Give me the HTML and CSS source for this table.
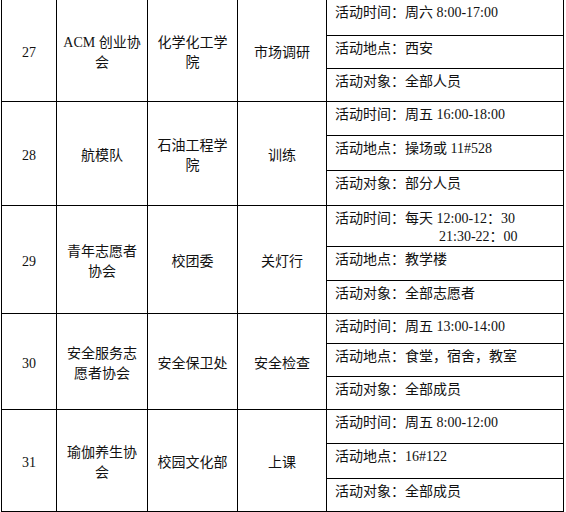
FILE: index.html
```html
<!DOCTYPE html>
<html lang="zh-CN">
<head>
<meta charset="utf-8">
<title>社团活动表</title>
<link rel="stylesheet" href="styles.css">
</head>
<body>
<table class="grid">
  <colgroup>
    <col class="c-num"><col class="c-org"><col class="c-dep"><col class="c-act"><col class="c-det">
  </colgroup>
  <tbody>
    <tr class="first">
      <td rowspan="3" class="mid">27</td>
      <td rowspan="3" class="mid">ACM 创业协<br>会</td>
      <td rowspan="3" class="mid">化学化工学<br>院</td>
      <td rowspan="3" class="mid">市场调研</td>
      <td class="det h35">活动时间：周六 8:00-17:00</td>
    </tr>
    <tr><td class="det h33">活动地点：西安</td></tr>
    <tr><td class="det h33">活动对象：全部人员</td></tr>

    <tr>
      <td rowspan="3" class="mid">28</td>
      <td rowspan="3" class="mid">航模队</td>
      <td rowspan="3" class="mid">石油工程学<br>院</td>
      <td rowspan="3" class="mid">训练</td>
      <td class="det h34">活动时间：周五 16:00-18:00</td>
    </tr>
    <tr><td class="det h35">活动地点：操场或 11#528</td></tr>
    <tr><td class="det h35">活动对象：部分人员</td></tr>

    <tr>
      <td rowspan="3" class="mid">29</td>
      <td rowspan="3" class="mid">青年志愿者<br>协会</td>
      <td rowspan="3" class="mid">校团委</td>
      <td rowspan="3" class="mid">关灯行</td>
      <td class="det h40">活动时间：每天 12:00-12：30<span class="cont">21:30-22：00</span></td>
    </tr>
    <tr><td class="det h34">活动地点：教学楼</td></tr>
    <tr><td class="det h33">活动对象：全部志愿者</td></tr>

    <tr>
      <td rowspan="3" class="mid">30</td>
      <td rowspan="3" class="mid">安全服务志<br>愿者协会</td>
      <td rowspan="3" class="mid">安全保卫处</td>
      <td rowspan="3" class="mid">安全检查</td>
      <td class="det h30">活动时间：周五 13:00-14:00</td>
    </tr>
    <tr><td class="det h33">活动地点：食堂，宿舍，教室</td></tr>
    <tr><td class="det h33">活动对象：全部成员</td></tr>

    <tr>
      <td rowspan="3" class="mid">31</td>
      <td rowspan="3" class="mid">瑜伽养生协<br>会</td>
      <td rowspan="3" class="mid">校园文化部</td>
      <td rowspan="3" class="mid">上课</td>
      <td class="det h34">活动时间：周五 8:00-12:00</td>
    </tr>
    <tr><td class="det h35">活动地点：16#122</td></tr>
    <tr><td class="det h33">活动对象：全部成员</td></tr>
  </tbody>
</table>
</body>
</html>
```

FILE: styles.css
```css
html, body {
  margin: 0;
  padding: 0;
  background: #fff;
}

body {
  font-family: "Liberation Serif", "Noto Sans CJK SC", serif;
  font-size: 14px;
  color: #111;
}

.grid {
  border-collapse: collapse;
  table-layout: fixed;
  width: 562px;
  margin-left: 1px;
}

.c-num { width: 55px; }
.c-org { width: 91px; }
.c-dep { width: 90px; }
.c-act { width: 89px; }
.c-det { width: 237px; }

.grid td {
  border: 1px solid #000;
  padding: 0;
  box-sizing: border-box;
}

.grid .first td {
  border-top: 0;
}

.mid {
  text-align: center;
  vertical-align: middle;
  line-height: 20px;
  padding: 5px 6px 0 6px !important;
}

.det {
  vertical-align: top;
  line-height: 18px;
  padding: 4px 6px 0 8px !important;
  white-space: nowrap;
}

.cont {
  display: block;
  padding-left: 104px;
}

.h30 { height: 30px; }
.h33 { height: 33px; }
.h34 { height: 34px; }
.h35 { height: 35px; }
.h40 { height: 40px; }
```
